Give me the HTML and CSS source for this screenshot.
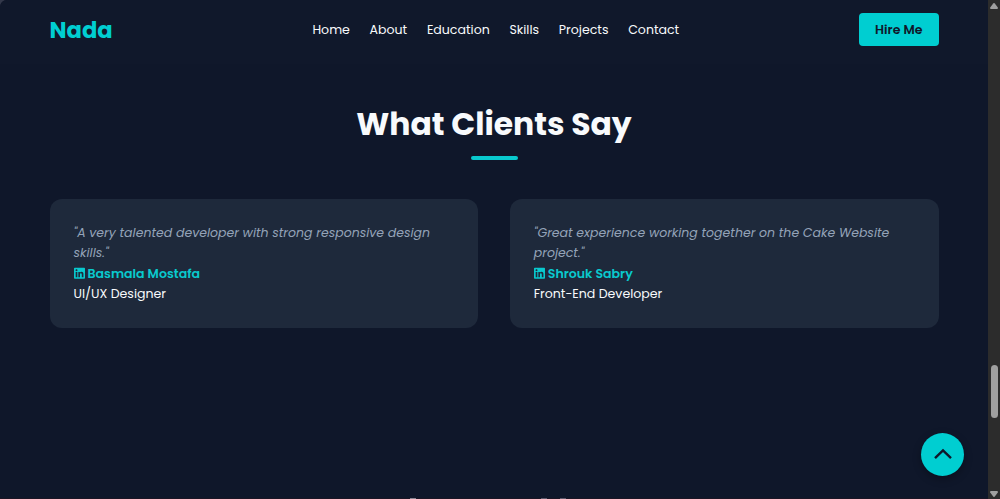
FILE: index.html
```
<!DOCTYPE html>
<html lang="en">
<head>
<meta charset="utf-8">
<title>Nada</title>
<link rel="stylesheet" href="styles.css">
</head>
<body>
<div class="window">
  <div class="page">
    <header class="navbar">
      <a class="logo">Nada</a>
      <nav class="links">
        <a>Home</a><a>About</a><a>Education</a><a>Skills</a><a>Projects</a><a>Contact</a>
      </nav>
      <a class="hire">Hire Me</a>
    </header>
    <main class="clients">
      <h2 class="title">What Clients Say</h2>
      <div class="cards">
        <article class="card">
          <p class="quote">"A very talented developer with strong responsive design skills."</p>
          <h4 class="name"><svg class="linkedin" viewBox="0 0 448 512"><path d="M416 32H31.900C14.300 32 0 46.500 0 64.300v383.400C0 465.500 14.300 480 31.900 480H416c17.600 0 32-14.500 32-32.300V64.300c0-17.800-14.400-32.300-32-32.300zM135.400 416H69V202.200h66.500V416zm-33.200-243c-21.300 0-38.500-17.300-38.500-38.500S80.900 96 102.200 96c21.200 0 38.500 17.300 38.500 38.500 0 21.300-17.200 38.500-38.500 38.500zm282.100 243h-66.400V312c0-24.800-.5-56.700-34.500-56.700-34.600 0-39.900 27-39.900 54.900V416h-66.400V202.200h63.700v29.200h.9c8.900-16.800 30.600-34.500 62.900-34.500 67.200 0 79.700 44.300 79.700 101.900V416z"/></svg> Basmala Mostafa</h4>
          <p class="role">UI/UX Designer</p>
        </article>
        <article class="card">
          <p class="quote">"Great experience working together on the Cake Website project."</p>
          <h4 class="name"><svg class="linkedin" viewBox="0 0 448 512"><path d="M416 32H31.900C14.300 32 0 46.500 0 64.300v383.400C0 465.500 14.300 480 31.900 480H416c17.600 0 32-14.500 32-32.300V64.300c0-17.800-14.400-32.300-32-32.300zM135.400 416H69V202.200h66.500V416zm-33.200-243c-21.300 0-38.500-17.300-38.500-38.500S80.900 96 102.200 96c21.200 0 38.500 17.300 38.500 38.500 0 21.300-17.200 38.500-38.500 38.500zm282.100 243h-66.400V312c0-24.800-.5-56.700-34.500-56.700-34.600 0-39.900 27-39.900 54.900V416h-66.400V202.200h63.700v29.200h.9c8.900-16.800 30.600-34.500 62.900-34.500 67.200 0 79.700 44.300 79.700 101.900V416z"/></svg> Shrouk Sabry</h4>
          <p class="role">Front-End Developer</p>
        </article>
      </div>
    </main>
    <a class="top"><svg viewBox="0 0 18 10"><path d="M1 9.200 9 1.400l8 7.800"/></svg></a>
    <div class="next-heading"><i></i><i></i><i></i></div>
  </div>
  <div class="scrollbar">
    <svg class="arrow" viewBox="0 0 8 6"><path d="M3.200.5a1 1 0 0 1 1.600 0L7.800 4.600Q8.200 6 7 6H1Q-.2 6 .2 4.600z"/></svg>
    <div class="track"><div class="thumb"></div></div>
    <svg class="arrow down" viewBox="0 0 8 6"><path d="M3.200.5a1 1 0 0 1 1.600 0L7.800 4.600Q8.200 6 7 6H1Q-.2 6 .2 4.600z"/></svg>
  </div>
</div>
</body>
</html>
```
FILE: styles.css
```
* { box-sizing: border-box; margin: 0; padding: 0; }
body {
  background: #33384a;
  color: #f8fafc;
  font: 12.57px/20.1px "Poppins", "Inter", sans-serif;
  overflow: hidden;
}
.window {
  display: flex;
  height: 499px;
  overflow: hidden;
  border-top-left-radius: 7px;
  background: #0f172a;
}
.page { flex: 1; position: relative; border-bottom: 1px solid #1a1524; }
.navbar {
  height: 64px;
  padding: 13px 49.500px 0;
  display: grid;
  grid-template-columns: 1fr auto 1fr;
  align-items: start;
  background: #10182b;
}
.logo {
  color: #00ced1;
  font-size: 22.630px;
  font-weight: 700;
  line-height: 35px;
}
.links { display: flex; gap: 19.700px; line-height: 34px; margin-left: 3.600px; }
.hire {
  justify-self: end;
  width: 79.500px;
  height: 33px;
  line-height: 34px;
  text-align: center;
  border-radius: 4px;
  background: #00ced1;
  color: #0f172a;
  font-weight: 600;
}
.clients { padding: 34px 49.500px 0; }
.title {
  display: flex;
  flex-direction: column;
  align-items: center;
  font-size: 31.430px;
  font-weight: 700;
  line-height: 52px;
}
.title::after {
  content: "";
  width: 47px;
  height: 3.500px;
  margin-top: 6px;
  border-radius: 2px;
  background: #09c9ce;
}
.cards {
  display: grid;
  grid-template-columns: 1fr 1fr;
  gap: 31.500px;
  margin-top: 39.500px;
}
.card {
  height: 129px;
  padding: 24.400px 24px 24px;
  border-radius: 12px;
  background: #1e293b;
}
.quote { color: #94a3b8; font-size: 12.520px; font-style: italic; }
.name { color: #09c9ce; font-size: 12.570px; font-weight: 600; }
.linkedin { width: 11px; height: 12.570px; vertical-align: -1.600px; fill: currentColor; }
.top {
  position: absolute;
  right: 24px;
  bottom: 22px;
  width: 43px;
  height: 43px;
  border-radius: 50%;
  background: #00ced1;
  display: grid;
  place-items: center;
  box-shadow: 0 3px 9px rgba(0, 0, 0, .3);
}
.top svg { width: 18px; height: 10px; margin-bottom: 2px; fill: none; stroke: #0f172a; stroke-width: 2.400; overflow: visible; }
.next-heading {
  position: absolute;
  left: 410px;
  bottom: -1px;
  display: flex;
}
.next-heading i { width: 6px; height: 1px; background: #888593; }
.next-heading i:nth-child(2) { margin-left: 125px; background: #5c586b; }
.next-heading i:nth-child(3) { margin-left: 13px; background: #5c586b; }
.scrollbar {
  width: 12px;
  padding: 3px 0 2px;
  background: #2c2c2c;
  display: flex;
  flex-direction: column;
  align-items: center;
}
.arrow { width: 8px; height: 6px; fill: #a0a0a0; }
.down { transform: rotate(180deg); }
.track { flex: 1; padding-top: 356px; }
.thumb { width: 7px; height: 53px; border-radius: 4px; background: #9f9f9f; }
```
